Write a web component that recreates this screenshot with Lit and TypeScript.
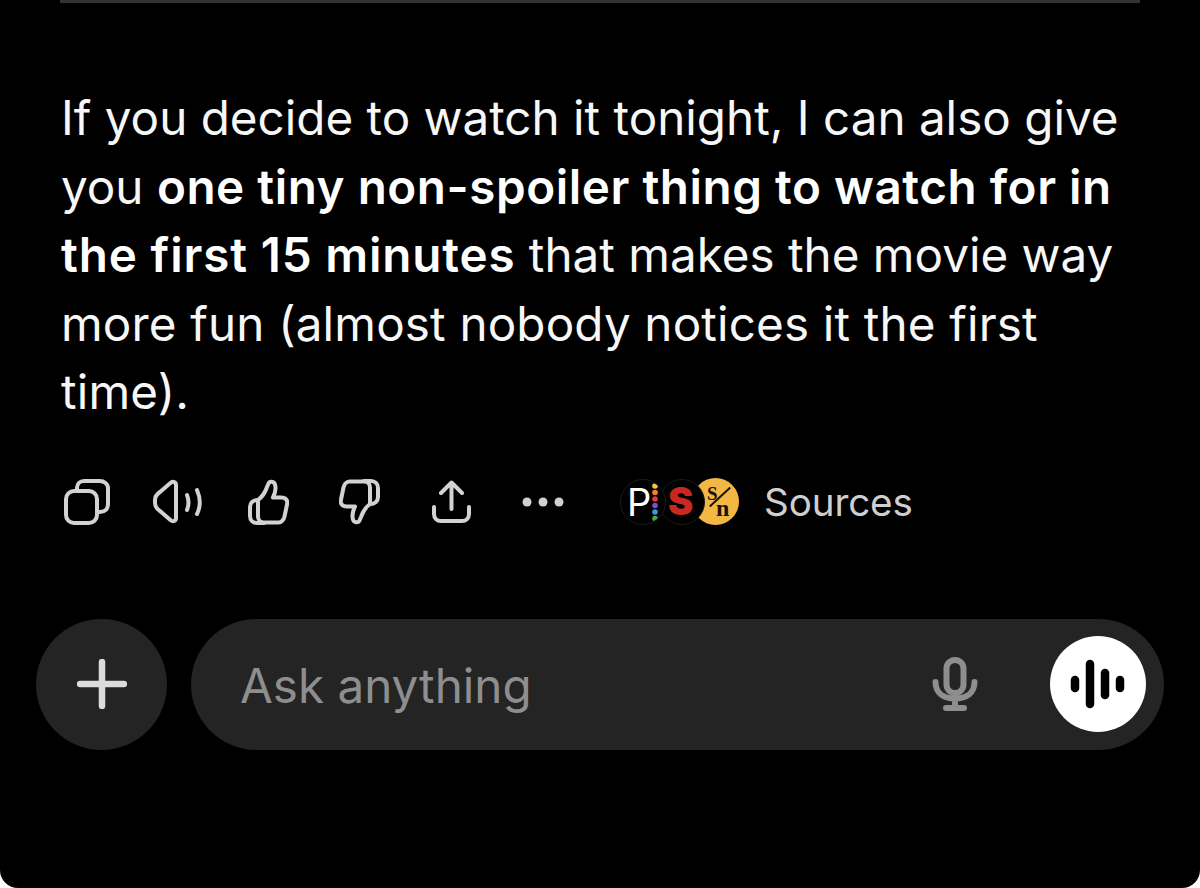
import { LitElement, html, css } from "lit";
import { customElement } from "lit/decorators.js";

@customElement("app-root")
export class AppRoot extends LitElement {
  static styles = css`
    :host { display: block; height: 888px; background: #fff; font-family: Inter, "Liberation Sans", sans-serif; }
    .screen { height: 888px; background: #000; border-radius: 0 0 18px 18px; overflow: hidden; display: flex; flex-direction: column; }
    .rule { height: 3px; margin: 0 60px; background: #333; flex: none; }
    .msg { margin: 81px 0 0 61px; font-size: 47.6px; line-height: 68.6px; color: #f7f7f7; white-space: nowrap; }
    .msg b { font-weight: 600; color: #fff; letter-spacing: 0.55px; }
    .msg b.wide { letter-spacing: 0.85px; }
    .msg .loose { letter-spacing: 0.16px; }
    .actions { display: flex; align-items: center; height: 50px; margin: 50px 0 0 64px; }
    .actions svg { display: block; flex: none; fill: none; stroke: #d2d2d2; stroke-width: 4; stroke-linecap: round; stroke-linejoin: round; }
    .copy { width: 46px; height: 46px; margin-right: 43px; }
    .speak { width: 52px; height: 46px; margin-right: 42px; }
    .up { width: 42px; height: 46px; margin-right: 50px; }
    .down { width: 42px; height: 46px; margin-right: 50px; }
    .share { width: 42px; height: 46px; margin-right: 48px; }
    .actions svg.dots { width: 44px; height: 12px; margin-right: 55px; fill: #d2d2d2; stroke: none; }
    .avatars { display: flex; align-items: center; margin-right: 25px; }
    .av { width: 46px; height: 46px; border-radius: 50%; flex: none; position: relative; overflow: hidden; box-sizing: border-box; }
    .p { background: #000; border: 1.5px solid #1c1c1c; color: #fff; z-index: 3; }
    .p span { position: absolute; left: 6px; top: 2px; font-size: 38px; line-height: 40px; font-weight: 400; }
    .actions .p svg.pd { position: absolute; left: 29px; top: 3px; width: 10px; height: 38px; stroke: none; }
    .s { background: #000; border: 1.5px solid #1c1c1c; margin-left: -7px; z-index: 2; color: #c9281e; }
    .s span { position: absolute; left: 8px; top: 0; font-size: 38px; line-height: 43px; font-weight: 900; }
    .n { background: #f3b844; margin-left: -13px; width: 47px; height: 47px; z-index: 1; color: #1a1408; }
    .n .l { position: absolute; left: 15px; top: 5px; font: 700 19px/22px "Liberation Serif", serif; }
    .n .r { position: absolute; left: 24px; top: 17px; font: 700 24px/26px "Liberation Serif", serif; }
    .n .slash { position: absolute; left: 14px; top: 18px; width: 28px; height: 2px; background: #1a1408; transform: rotate(-43deg); }
    .sources { font-size: 38.6px; line-height: 44px; color: #cfcfcf; letter-spacing: -0.1px; }
    .composer { display: flex; align-items: center; gap: 24px; margin: 92px 36px 0; }
    .plus { width: 131px; height: 131px; border-radius: 50%; background: #242424; display: flex; align-items: center; justify-content: center; flex: none; }
    .plus svg { width: 50px; height: 50px; stroke: #dcdcdc; stroke-width: 6.500; stroke-linecap: round; fill: none; }
    .pill { flex: 1; height: 131px; border-radius: 66px; background: #242424; display: flex; align-items: center; padding: 0 18px 0 49px; }
    .ph { flex: 1; font-size: 47.6px; color: #8e8e8e; padding-top: 3px; }
    .mic { width: 46px; height: 56px; margin-right: 72px; fill: none; stroke: #8e8e8e; stroke-width: 6; stroke-linecap: round; }
    .voice { width: 96px; height: 96px; border-radius: 50%; background: #fff; display: flex; align-items: center; justify-content: center; flex: none; }
    .voice svg { width: 56px; height: 50px; stroke: #000; stroke-width: 8.500; stroke-linecap: round; fill: none; }
  `;

  render() {
    return html`<div class="screen">
      <div class="rule"></div>
      <div class="msg">If you decide to watch it tonight, I can also give<br />you <b>one tiny non-spoiler thing to watch for in</b><br /><b class="wide">the first 15 minutes</b> that makes the movie way<br /><span class="loose">more fun (almost nobody notices it the first</span><br /><span class="loose">time).</span></div>
      <div class="actions">
        <svg class="copy" viewBox="0 0 46 46"><path d="M13 10V9c0-4 3-7 7-7h16c4 0 8 3 8 7v16c0 5-3 8-8 8h-2"/><rect x="2" y="12" width="31" height="32" rx="8"/></svg>
        <svg class="speak" viewBox="0 0 52 46"><path d="M23 6c0-3-3-4-5-2.500L7 13c-3 2-5 4-5 8v3c0 4 2 6 5 8l11 9.500c2 1.500 5 .5 5-2.500z"/><path d="M34 16c2 5 2 10 0 15M44 11c3.500 8 3.500 17 0 24"/></svg>
        <svg class="up" viewBox="0 0 42 46"><path d="M11 21c4-3 7-7 9-13l1.500-3.500c1-2.500 5.500-2.500 6.500 1 1 3.500 0 9-2 13h8c5 0 7 3 6 7l-2.500 12c-.7 3-3 6-6 6H17c-4 0-6-3-6-6z"/><path d="M11 21c-5 0-8 3-8 7v9c0 4 3 7 7 7h7"/></svg>
        <svg class="down" viewBox="0 0 42 46"><g transform="rotate(180 21 23)"><path d="M11 21c4-3 7-7 9-13l1.500-3.500c1-2.500 5.500-2.500 6.500 1 1 3.500 0 9-2 13h8c5 0 7 3 6 7l-2.500 12c-.7 3-3 6-6 6H17c-4 0-6-3-6-6z"/><path d="M11 21c-5 0-8 3-8 7v9c0 4 3 7 7 7h7"/></g></svg>
        <svg class="share" viewBox="0 0 42 46"><path d="M20.500 30V5M10 14 20.500 3.500 31 14"/><path d="M3 28v7c0 4 3 7 7 7h21c4 0 7-3 7-7v-7"/></svg>
        <svg class="dots" viewBox="0 0 44 12"><circle cx="6" cy="6" r="4.500"/><circle cx="22" cy="6" r="4.500"/><circle cx="38" cy="6" r="4.500"/></svg>
        <div class="avatars">
          <div class="av p"><span>P</span>
            <svg class="pd" viewBox="0 0 10 38"><circle cx="5" cy="3" r="2.800" fill="#f4c63d"/><circle cx="5" cy="9.500" r="2.800" fill="#ef7f2f"/><circle cx="5" cy="16" r="2.800" fill="#e0393e"/><circle cx="5" cy="22.500" r="2.800" fill="#7b4fd0"/><circle cx="5" cy="29" r="2.800" fill="#3a97e0"/><circle cx="5" cy="35.500" r="2.800" fill="#48a850"/></svg>
          </div>
          <div class="av s"><span>S</span></div>
          <div class="av n"><span class="l">S</span><span class="slash"></span><span class="r">n</span></div>
        </div>
        <div class="sources">Sources</div>
      </div>
      <div class="composer">
        <div class="plus"><svg viewBox="0 0 50 50"><path d="M25 3v44M3 25h44"/></svg></div>
        <div class="pill">
          <div class="ph">Ask anything</div>
          <svg class="mic" viewBox="0 0 46 56"><rect x="14.500" y="4" width="17" height="33" rx="8.500"/><path d="M3.500 26c0 11 8 16.500 19.500 16.500S42.500 37 42.500 26M23 43v8M14 52h18"/></svg>
          <div class="voice"><svg viewBox="0 0 56 50"><path d="M5 21v8M20 5v40M35 14v22M50 21v8"/></svg></div>
        </div>
      </div>
    </div>`;
  }
}
